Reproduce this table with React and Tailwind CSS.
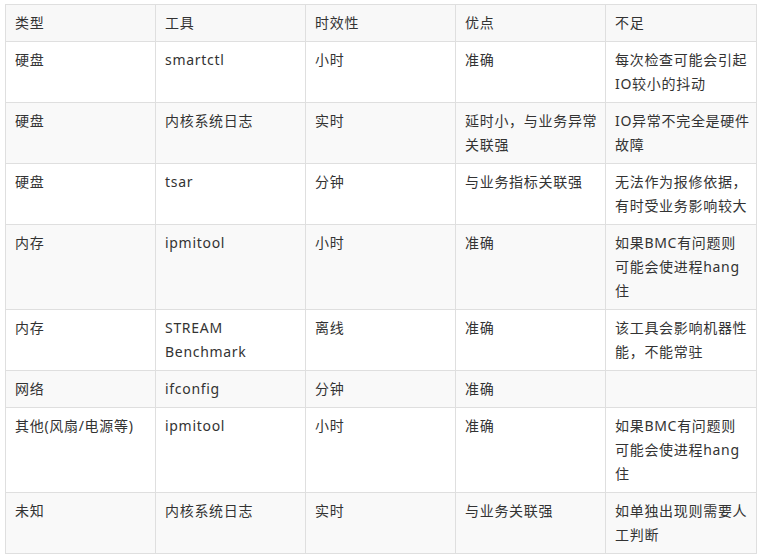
import React from 'react';

const head = ['类型', '工具', '时效性', '优点', '不足'];

const rows = [
  [['硬盘'], ['smartctl'], ['小时'], ['准确'], ['每次检查可能会引起', 'IO较小的抖动']],
  [['硬盘'], ['内核系统日志'], ['实时'], ['延时小，与业务异常', '关联强'], ['IO异常不完全是硬件', '故障']],
  [['硬盘'], ['tsar'], ['分钟'], ['与业务指标关联强'], ['无法作为报修依据，', '有时受业务影响较大']],
  [['内存'], ['ipmitool'], ['小时'], ['准确'], ['如果BMC有问题则', '可能会使进程hang', '住']],
  [['内存'], ['STREAM', 'Benchmark'], ['离线'], ['准确'], ['该工具会影响机器性', '能，不能常驻']],
  [['网络'], ['ifconfig'], ['分钟'], ['准确'], []],
  [['其他(风扇/电源等)'], ['ipmitool'], ['小时'], ['准确'], ['如果BMC有问题则', '可能会使进程hang', '住']],
  [['未知'], ['内核系统日志'], ['实时'], ['与业务关联强'], ['如单独出现则需要人', '工判断']],
];

function Cell({ lines, Tag = 'td' }) {
  return (
    <Tag className="border border-[#dfdfdf] pl-[9px] pr-[3px] py-[6px] text-left align-top font-normal whitespace-nowrap">
      {lines.map((l, i) => (
        <div key={i} className="h-6">{l}</div>
      ))}
    </Tag>
  );
}

export default function App() {
  return (
    <div
      className="min-h-[557px] w-[761px] bg-white pl-[5px] pt-[4px] text-[14px] leading-6 tracking-[0.7px] text-[#333]"
      style={{ fontFamily: '"Noto Sans", "Noto Sans CJK SC", sans-serif' }}
    >
      <table className="w-[751px] table-fixed border-collapse">
        <colgroup>
          <col className="w-[150px]" />
          <col className="w-[150px]" />
          <col className="w-[150px]" />
          <col className="w-[150px]" />
          <col className="w-[151px]" />
        </colgroup>
        <thead>
          <tr className="bg-[#f8f8f8]">
            {head.map((h) => (
              <Cell key={h} Tag="th" lines={[h]} />
            ))}
          </tr>
        </thead>
        <tbody>
          {rows.map((r, i) => (
            <tr key={i} className={i % 2 === 1 ? 'bg-[#f9f9f9]' : 'bg-white'}>
              {r.map((c, j) => (
                <Cell key={j} lines={c} />
              ))}
            </tr>
          ))}
        </tbody>
      </table>
    </div>
  );
}
